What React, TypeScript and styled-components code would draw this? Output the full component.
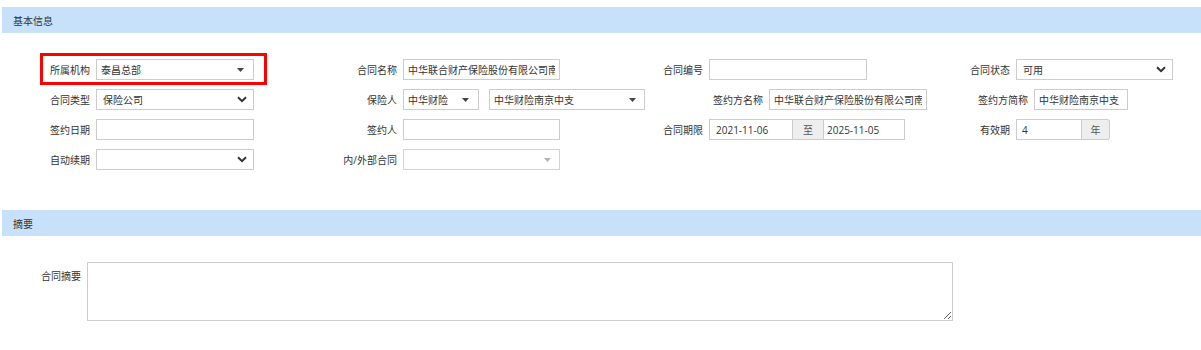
import { FC, ReactNode } from "react";
import styled, { createGlobalStyle } from "styled-components";

const GlobalStyle = createGlobalStyle`
  body {
    margin: 0;
    background: #fff;
    font-family: "Open Sans", "Noto Sans CJK SC", sans-serif;
    font-size: 10px;
    color: #333;
  }
`;

const Page = styled.div`
  padding: 7px 0 0 2px;
`;

const SectionHeader = styled.div`
  height: 26px;
  background: #c7e1fb;
  display: flex;
  align-items: center;
  padding-left: 11px;
  color: #333;
`;

const FormGrid = styled.div`
  display: grid;
  grid-template-columns: 307px 306px 313px 1fr;
  grid-auto-rows: 21px;
  row-gap: 9px;
  padding: 26px 0 40px;
`;

const Field = styled.div<{ $highlight?: boolean }>`
  position: relative;
  display: flex;
  align-items: center;

  ${(p) =>
    p.$highlight &&
    `
    &::after {
      content: "";
      position: absolute;
      left: 38px;
      top: -6px;
      width: 227px;
      height: 32px;
      box-sizing: border-box;
      border: 3px solid #ff0000;
      pointer-events: none;
    }
  `}
`;

const Label = styled.label<{ $w?: number }>`
  width: ${(p) => p.$w ?? 88}px;
  margin-right: 6px;
  text-align: right;
  white-space: nowrap;
  color: #333;
  flex-shrink: 0;
`;

const Input = styled.input<{ $w: number; $pad?: number }>`
  width: ${(p) => p.$w}px;
  height: 21px;
  box-sizing: border-box;
  border: 1px solid #ccc;
  border-radius: 0;
  background: #fff;
  margin: 0;
  padding: 0 ${(p) => p.$pad ?? 4}px;
  font: inherit;
  color: #333;
  outline: none;
  flex-shrink: 0;
`;

const SelectBox = styled.div<{ $w: number; $pad: number; $disabled?: boolean; $gap?: number }>`
  width: ${(p) => p.$w}px;
  height: 21px;
  box-sizing: border-box;
  border: 1px solid ${(p) => (p.$disabled ? "#d4d4d4" : "#ccc")};
  background: #fff;
  padding: 0 ${(p) => p.$pad}px;
  margin-right: ${(p) => p.$gap ?? 0}px;
  display: flex;
  align-items: center;
  justify-content: space-between;
  white-space: nowrap;
  overflow: hidden;
  color: #333;
  flex-shrink: 0;
`;

const Group = styled.div`
  display: flex;
  align-items: center;
`;

const Addon = styled.div<{ $w: number; $round?: boolean }>`
  width: ${(p) => p.$w}px;
  height: 21px;
  box-sizing: border-box;
  border: 1px solid #ccc;
  border-left: none;
  border-right: ${(p) => (p.$round ? "1px solid #ccc" : "none")};
  border-radius: ${(p) => (p.$round ? "0 3px 3px 0" : "0")};
  background: #eee;
  display: flex;
  align-items: center;
  justify-content: center;
  color: #555;
  flex-shrink: 0;
`;

const SummaryRow = styled.div`
  display: flex;
  align-items: flex-start;
  padding-top: 26px;
`;

const SummaryLabel = styled(Label)`
  padding-top: 6px;
`;

const TextArea = styled.textarea`
  width: 866px;
  height: 59px;
  box-sizing: border-box;
  border: 1px solid #ccc;
  margin: 0;
  padding: 4px;
  font: inherit;
  color: #333;
  outline: none;
`;

const Triangle: FC<{ light?: boolean; offset: number }> = ({ light, offset }) => (
  <svg width="7" height="4" viewBox="0 0 7 4" style={{ marginRight: offset, flexShrink: 0 }}>
    <path d="M0 0 L7 0 L3.5 4 Z" fill={light ? "#b5b5b5" : "#444"} />
  </svg>
);

const Chevron: FC = () => (
  <svg width="10" height="7" viewBox="0 0 10 7" style={{ flexShrink: 0 }}>
    <path d="M1 1.2 L5 5.2 L9 1.2" fill="none" stroke="#333" strokeWidth="2" />
  </svg>
);

interface SelectProps {
  w: number;
  value?: string;
  kind: "tri" | "chev";
  disabled?: boolean;
  gap?: number;
  arrow?: number;
}

const Select: FC<SelectProps> = ({ w, value, kind, disabled, gap, arrow = 4 }) => (
  <SelectBox $w={w} $pad={kind === "chev" ? 6 : 4} $disabled={disabled} $gap={gap}>
    <span>{value}</span>
    {kind === "tri" ? <Triangle light={disabled} offset={arrow} /> : <Chevron />}
  </SelectBox>
);

const FieldRow: FC<{ label: string; w?: number; highlight?: boolean; children: ReactNode }> = ({
  label,
  w,
  highlight,
  children,
}) => (
  <Field $highlight={highlight}>
    <Label $w={w}>{label}</Label>
    {children}
  </Field>
);

const App: FC = () => {
  return (
    <Page>
      <GlobalStyle />
      <SectionHeader>基本信息</SectionHeader>
      <FormGrid>
        <FieldRow label="所属机构" highlight>
          <Select w={158} kind="tri" value="泰昌总部" arrow={5} />
        </FieldRow>
        <FieldRow label="合同名称">
          <Input $w={157} readOnly value="中华联合财产保险股份有限公司南京中心支公司" />
        </FieldRow>
        <FieldRow label="合同编号">
          <Input $w={158} readOnly value="" />
        </FieldRow>
        <FieldRow label="合同状态" w={82}>
          <Select w={157} kind="chev" value="可用" />
        </FieldRow>

        <FieldRow label="合同类型">
          <Select w={158} kind="chev" value="保险公司" />
        </FieldRow>
        <FieldRow label="保险人">
          <Select w={76} kind="tri" value="中华财险" gap={10} arrow={5} />
          <Select w={156} kind="tri" value="中华财险南京中支" />
        </FieldRow>
        <FieldRow label="签约方名称" w={148}>
          <Input $w={158} readOnly value="中华联合财产保险股份有限公司南京中心支公司" />
        </FieldRow>
        <FieldRow label="签约方简称" w={100}>
          <Input $w={94} readOnly value="中华财险南京中支" />
        </FieldRow>

        <FieldRow label="签约日期">
          <Input $w={158} readOnly value="" />
        </FieldRow>
        <FieldRow label="签约人">
          <Input $w={157} readOnly value="" />
        </FieldRow>
        <FieldRow label="合同期限">
          <Group>
            <Input $w={84} $pad={6} readOnly value="2021-11-06" />
            <Addon $w={30}>至</Addon>
            <Input $w={82} $pad={3} readOnly value="2025-11-05" />
          </Group>
        </FieldRow>
        <FieldRow label="有效期" w={82}>
          <Group>
            <Input $w={66} $pad={5} readOnly value="4" />
            <Addon $w={28} $round>年</Addon>
          </Group>
        </FieldRow>

        <FieldRow label="自动续期">
          <Select w={158} kind="chev" />
        </FieldRow>
        <FieldRow label="内/外部合同">
          <Select w={157} kind="tri" disabled />
        </FieldRow>
      </FormGrid>

      <SectionHeader>摘要</SectionHeader>
      <SummaryRow>
        <SummaryLabel $w={79}>合同摘要</SummaryLabel>
        <TextArea />
      </SummaryRow>
    </Page>
  );
};

export default App;
